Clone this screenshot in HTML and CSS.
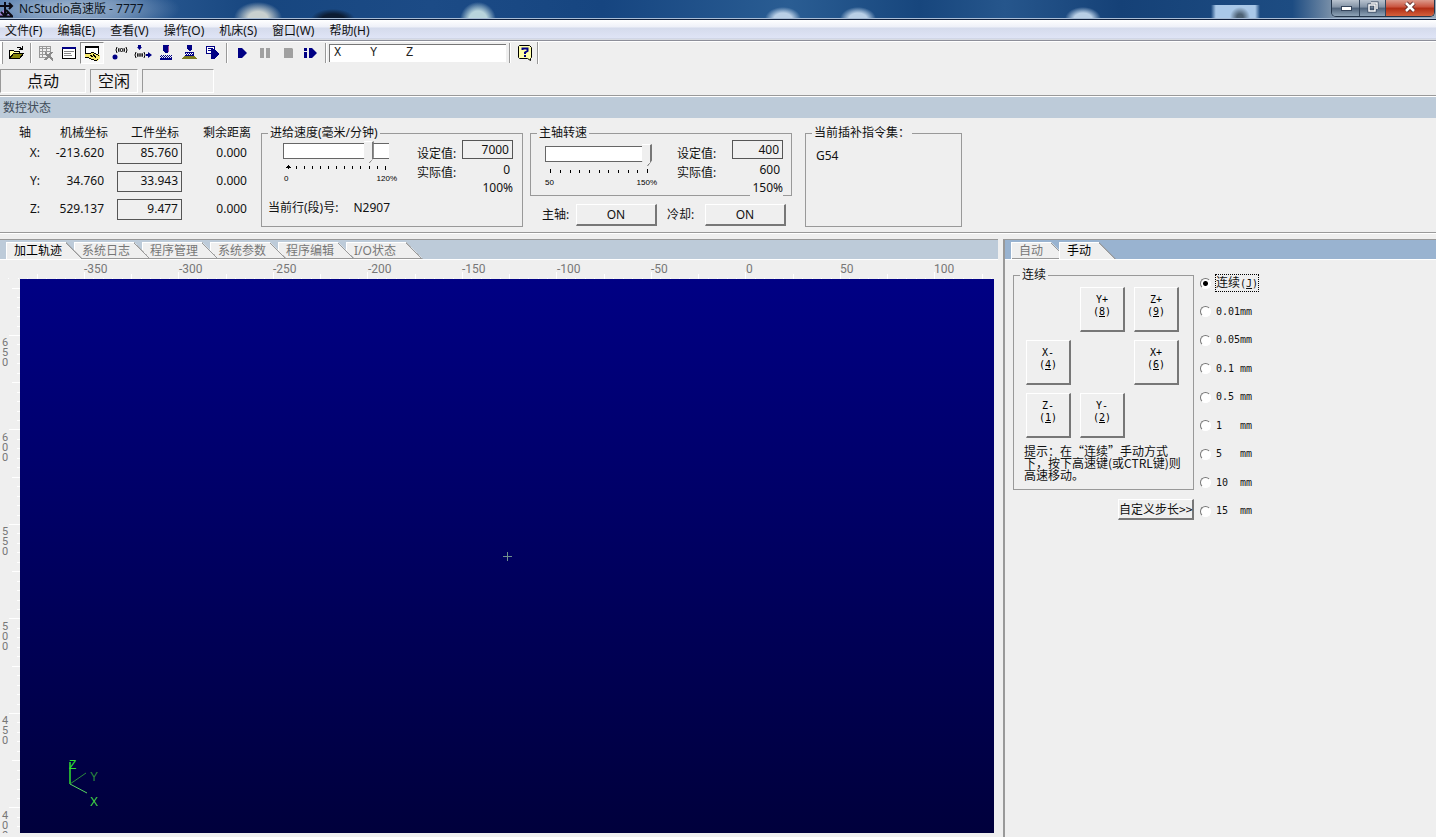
FILE: index.html
```html
<!DOCTYPE html>
<html lang="zh-CN">
<head>
<meta charset="utf-8">
<title>NcStudio高速版 - 7777</title>
<link rel="stylesheet" href="styles.css">
</head>
<body>
<div class="app">
  <header class="titlebar">
    <svg class="app-icon" width="14" height="16" viewBox="0 0 14 16">
      <path fill="#a583d6" d="M0 11l5-4v7H0zM8 9l5 5H8z"/>
      <path fill="none" stroke="#0b0b14" stroke-width="2" d="M0 4h11M9 1l3 3-3 3M5 0v12M1 10l4 4 3-4M6 8l6 6M0 14.500h13"/>
    </svg>
    <h1 class="title">NcStudio高速版 - 7777</h1>
    <div class="window-controls">
      <button class="win-btn" aria-label="最小化"><svg width="12" height="12" viewBox="0 0 12 12"><rect x="1.500" y="5.500" width="10" height="4" fill="#fff" stroke="#35455c"/></svg></button>
      <button class="win-btn" aria-label="还原"><svg width="12" height="12" viewBox="0 0 12 12"><path d="M4 2h6v6M2 4h6v6H2z" fill="none" stroke="#35455c" stroke-width="3"/><path d="M4 2h6v6M2 4h6v6H2z" fill="none" stroke="#fff" stroke-width="1.500"/></svg></button>
      <button class="win-btn win-close" aria-label="关闭"><svg width="14" height="12" viewBox="0 0 14 12"><path d="M3 2l8 8M11 2l-8 8" stroke="#5b2a2a" stroke-width="4.500"/><path d="M3 2l8 8M11 2l-8 8" stroke="#fff" stroke-width="2.500"/></svg></button>
    </div>
  </header>

  <nav class="menubar">
    <button>文件(F)</button><button>编辑(E)</button><button>查看(V)</button><button>操作(O)</button><button>机床(S)</button><button>窗口(W)</button><button>帮助(H)</button>
  </nav>

  <div class="toolbar">
    <span class="grip"></span>
    <button class="tool" aria-label="打开"><svg width="16" height="16" viewBox="0 0 16 16" shape-rendering="crispEdges"><path fill="#84840a" stroke="#000" d="M1.500 13.500v-8h4l1 1h5v2"/><path fill="#ffffa0" d="M2 6h3l1 1h5v2H5l-3 4z"/><path fill="#84840a" stroke="#000" d="M1.500 13.500l4-5h10l-4 5z"/><path fill="none" stroke="#000" d="M8.500 3.500l1-1h3l1 2M14.500 1v4M11 4.500h4"/></svg></button>
    <span class="sep"></span>
    <button class="tool" aria-label="卸载"><svg width="16" height="16" viewBox="0 0 16 16" shape-rendering="crispEdges"><path fill="none" stroke="#999" d="M1.500 1.500h11v11h-11zM1 3.500h11M1 6.500h11M1 9.500h11M4.500 2v11M8.500 2v7"/><path fill="none" stroke="#8a8a8a" stroke-width="2" d="M7 8l8 7M14 7l-7 8"/></svg></button>
    <button class="tool" aria-label="窗口"><svg width="16" height="16" viewBox="0 0 16 16" shape-rendering="crispEdges"><path fill="#fff" stroke="#000" d="M1.500 2.500h13v11h-13z"/><path fill="#000084" d="M1 2h14v2H1z"/><path stroke="#888" d="M3 6.500h10M3 8.500h7M3 10.500h8"/></svg></button>
    <button class="tool pressed" aria-label="手动"><svg width="16" height="16" viewBox="0 0 16 16" shape-rendering="crispEdges"><path fill="#fff" stroke="#000" d="M1.500 1.500h13v10h-13z"/><path fill="#000" d="M1 1h14v2H1z"/><path fill="#f5e76a" d="M1 8h5l3-1 4 2 3 1v4l-3 2-4-1-4-2H1z"/><path fill="none" stroke="#000" d="M1 8.500h4l4-1 4 2 2 1M1 12.500h3l4 2 4 1 2-1M6 10l3 2M9 9l3 4"/></svg></button>
    <span class="gap"></span>
    <button class="tool" aria-label="回原点"><svg width="16" height="16" viewBox="0 0 16 16"><circle cx="3" cy="12" r="2.500" fill="#000084"/><path fill="none" stroke="#000" d="M5 2q-2 3 0 6M7 3q-1 2 0 4M14 2q2 3 0 6M12 3q1 2 0 4"/><circle cx="9.500" cy="5" r="1.500" fill="none" stroke="#000"/></svg></button>
    <button class="tool" aria-label="回工件原点"><svg width="18" height="16" viewBox="0 0 18 16"><path fill="#000084" d="M4 0h3v2h1L5.500 5 3 2h1zM12 9h2V7l4 3-4 3v-2h-2z"/><path fill="none" stroke="#000" d="M2 7q-2 3 0 6M4 8q-1 2 0 4M10 7q2 3 0 6M8 8q1 2 0 4"/><circle cx="6" cy="10" r="1.200" fill="none" stroke="#000"/></svg></button>
    <button class="tool" aria-label="对刀"><svg width="16" height="16" viewBox="0 0 16 16" shape-rendering="crispEdges"><path fill="#000084" d="M5 0h6v6L9 8H8L5 6z"/><path fill="#a04aa0" d="M10 1h1v6h-1z"/><path fill="none" stroke="#000084" stroke-dasharray="1 1" d="M3 10.500h11M2 11.500h11M3 12.500h11"/><path fill="#000084" d="M2 13h12v2H2z"/></svg></button>
    <button class="tool" aria-label="浮动对刀"><svg width="16" height="16" viewBox="0 0 16 16" shape-rendering="crispEdges"><path fill="#000084" d="M6 0h5v4L9 6H8L6 4zM4 7h9v4H4z"/><path stroke="#fff" stroke-dasharray="1 1" d="M5 8.500h7M4 9.500h8"/><path fill="#7c7c20" d="M3 11h11l2 3H1z"/></svg></button>
    <button class="tool" aria-label="继续"><svg width="16" height="16" viewBox="0 0 16 16" shape-rendering="crispEdges"><path fill="#fff" stroke="#000084" d="M2.500 1.500h8v7h-8z"/><path stroke="#000084" d="M4 3.500h5M4 5.500h5"/><path fill="#000084" d="M7 4h3l5 5-5 5H7z"/></svg></button>
    <span class="sep"></span>
    <button class="tool" aria-label="开始"><svg width="16" height="16" viewBox="0 0 16 16"><path fill="#000084" d="M4 3h4l5 5-5 5H4z"/></svg></button>
    <button class="tool" aria-label="暂停"><svg width="16" height="16" viewBox="0 0 16 16"><path fill="#a0a0a0" d="M3 3h4v10H3zM9 3h4v10H9z"/></svg></button>
    <button class="tool" aria-label="停止"><svg width="16" height="16" viewBox="0 0 16 16"><path fill="#a0a0a0" d="M4 3h8l1 1v9H4z"/></svg></button>
    <button class="tool" aria-label="断点继续"><svg width="16" height="16" viewBox="0 0 16 16"><path fill="#000084" d="M1 3h3v3H1zM1 7h3v6H1zM6 3h3l5 5-5 5H6z"/></svg></button>
    <span class="sep"></span>
    <input class="mdi" aria-label="坐标指令" value="X    Y    Z">
    <span class="sep"></span>
    <button class="tool" aria-label="帮助"><svg width="16" height="18" viewBox="0 0 16 18"><path fill="#ffffa8" stroke="#000" d="M2.500 1.500h10l2 2v10l-1 1v2l-3-2h-8l-1-1v-11z"/><path fill="none" stroke="#000084" stroke-width="2" d="M5.500 6V4.500h5V7L8 8.500V10M8 11v2"/></svg></button>
    <span class="sep sep-end"></span>
  </div>

  <div class="statusbar">
    <output class="state state-mode">点动</output>
    <output class="state state-run">空闲</output>
    <output class="state state-extra"></output>
  </div>

  <section class="dock">
    <h2 class="dock-title">数控状态</h2>
    <div class="dock-body">
      <table class="coords">
        <thead><tr><th>轴</th><th>机械坐标</th><th>工件坐标</th><th>剩余距离</th></tr></thead>
        <tbody>
          <tr><td>X:</td><td>-213.620</td><td><button class="value-box">85.760</button></td><td>0.000</td></tr>
          <tr><td>Y:</td><td>34.760</td><td><button class="value-box">33.943</button></td><td>0.000</td></tr>
          <tr><td>Z:</td><td>529.137</td><td><button class="value-box">9.477</button></td><td>0.000</td></tr>
        </tbody>
      </table>

      <fieldset class="group feed">
        <legend>进给速度(毫米/分钟)</legend>
        <div class="rate">
          <div class="slider">
            <input type="range" min="0" max="120" value="100" aria-label="进给倍率">
            <svg class="ticks" width="107" height="6" viewBox="0 0 107 6" shape-rendering="crispEdges"><path fill="#000" d="M5 0h1v1h1v1h1v1H6v1H5V3H3V2h1V1h1z"/><path stroke="#000" d="M13.500 1v3M21.500 1v3M29.500 1v3M37.500 1v3M45.500 1v3M53.500 1v3M61.500 1v3M69.500 1v3M77.500 1v3M86.500 1v3M94.500 1v3M102.500 1v4"/></svg>
            <div class="scale"><span>0</span><span>120%</span></div>
          </div>
          <div class="readings">
            <label for="feed-set">设定值:</label><input id="feed-set" class="value-box" value="7000">
            <span>实际值:</span><output>0</output>
            <output class="percent">100%</output>
          </div>
        </div>
        <p class="line-no"><span>当前行(段)号:</span><output>N2907</output></p>
      </fieldset>

      <div class="spindle-column">
        <fieldset class="group spindle">
          <legend>主轴转速</legend>
          <div class="rate">
            <div class="slider">
              <input type="range" min="50" max="150" value="150" aria-label="主轴倍率">
              <svg class="ticks" width="107" height="6" viewBox="0 0 107 6" shape-rendering="crispEdges"><path stroke="#000" d="M5.500 0v4M15.500 1v3M25.500 1v3M34.500 1v3M44.500 1v3M54.500 1v3M63.500 1v3M73.500 1v3M83.500 1v3M92.500 1v3M102.500 0v4"/></svg>
              <div class="scale"><span>50</span><span>150%</span></div>
            </div>
            <div class="readings">
              <label for="spindle-set">设定值:</label><input id="spindle-set" class="value-box" value="400">
              <span>实际值:</span><output>600</output>
              <output class="percent">150%</output>
            </div>
          </div>
        </fieldset>
        <div class="switches">
          <label for="spindle-on">主轴:</label><button id="spindle-on" class="raised">ON</button>
          <label for="coolant-on">冷却:</label><button id="coolant-on" class="raised">ON</button>
        </div>
      </div>

      <fieldset class="group modal">
        <legend>当前插补指令集：</legend>
        <output>G54</output>
      </fieldset>
    </div>
  </section>

  <main class="workspace">
    <section class="trace">
      <div class="tabs" role="tablist">
        <button class="tab active" role="tab" aria-selected="true">加工轨迹</button>
        <button class="tab" role="tab">系统日志</button>
        <button class="tab" role="tab">程序管理</button>
        <button class="tab" role="tab">系统参数</button>
        <button class="tab" role="tab">程序编辑</button>
        <button class="tab" role="tab">I/O状态</button>
      </div>
      <svg class="ruler-x" shape-rendering="crispEdges">
        <defs><pattern id="tx" x="84" width="189" height="20" patternUnits="userSpaceOnUse"><path stroke="#fff" d="M.5 12v8M47.500 14v6M94.500 12v8M142.500 14v6M9.500 18v2M19.500 18v2M28.500 18v2M38.500 18v2M57.500 18v2M66.500 18v2M76.500 18v2M85.500 18v2M104.500 18v2M113.500 18v2M123.500 18v2M132.500 18v2M151.500 18v2M161.500 18v2M170.500 18v2M180.500 18v2"/></pattern></defs>
        <rect width="100%" height="20" fill="url(#tx)"/>
        <text x="84" y="13">-350</text><text x="179" y="13">-300</text><text x="273" y="13">-250</text><text x="368" y="13">-200</text><text x="462" y="13">-150</text><text x="557" y="13">-100</text><text x="651" y="13">-50</text><text x="746" y="13">0</text><text x="840" y="13">50</text><text x="934" y="13">100</text>
      </svg>
      <div class="plot">
        <svg class="ruler-y" shape-rendering="crispEdges">
          <defs><pattern id="ty" y="56" width="20" height="189" patternUnits="userSpaceOnUse"><path stroke="#fff" d="M9 .5h11M12 47.500h8M9 94.500h11M12 142.500h8M17 9.500h3M17 19.500h3M17 28.500h3M17 38.500h3M17 57.500h3M17 66.500h3M17 76.500h3M17 85.500h3M17 104.500h3M17 113.500h3M17 123.500h3M17 132.500h3M17 151.500h3M17 161.500h3M17 170.500h3M17 180.500h3"/></pattern></defs>
          <rect width="20" height="100%" fill="url(#ty)"/>
          <text><tspan x="2" y="67">6</tspan><tspan x="2" y="77">5</tspan><tspan x="2" y="87">0</tspan></text>
          <text><tspan x="2" y="162">6</tspan><tspan x="2" y="172">0</tspan><tspan x="2" y="182">0</tspan></text>
          <text><tspan x="2" y="256">5</tspan><tspan x="2" y="266">5</tspan><tspan x="2" y="276">0</tspan></text>
          <text><tspan x="2" y="351">5</tspan><tspan x="2" y="361">0</tspan><tspan x="2" y="371">0</tspan></text>
          <text><tspan x="2" y="445">4</tspan><tspan x="2" y="455">5</tspan><tspan x="2" y="465">0</tspan></text>
          <text><tspan x="2" y="540">4</tspan><tspan x="2" y="550">0</tspan><tspan x="2" y="560">0</tspan></text>
        </svg>
        <div class="canvas">
          <svg class="cursor" width="9" height="9" viewBox="0 0 9 9" shape-rendering="crispEdges"><path stroke="#6f8f8c" d="M0 4.500h9M4.500 0v9"/></svg>
          <svg class="axes" width="36" height="56" viewBox="0 0 36 56"><path stroke="#2fe02f" stroke-width="1.500" d="M5 10v22"/><path stroke="#2b8a3c" d="M5 32l16-11"/><path stroke="#58d860" d="M5 32l17 9"/><text x="4" y="17" fill="#2fe02f">Z</text><text x="25" y="29" fill="#2b8a3c">Y</text><text x="25" y="54" fill="#45d845">X</text></svg>
        </div>
      </div>
    </section>

    <aside class="manual">
      <div class="tabs" role="tablist">
        <button class="tab" role="tab">自动</button>
        <button class="tab active" role="tab" aria-selected="true">手动</button>
      </div>
      <div class="manual-body">
        <div class="jog-column">
          <fieldset class="group jog">
            <legend>连续</legend>
            <div class="pad">
              <span></span>
              <button class="raised key">Y+<br>(<u>8</u>)</button>
              <button class="raised key">Z+<br>(<u>9</u>)</button>
              <button class="raised key">X-<br>(<u>4</u>)</button>
              <span></span>
              <button class="raised key">X+<br>(<u>6</u>)</button>
              <button class="raised key">Z-<br>(<u>1</u>)</button>
              <button class="raised key">Y-<br>(<u>2</u>)</button>
            </div>
            <p class="hint">提示：在“连续”手动方式<br>下，按下高速键(或CTRL键)则<br>高速移动。</p>
          </fieldset>
          <button class="raised custom">自定义步长&gt;&gt;</button>
        </div>
        <div class="steps">
          <label><input type="radio" name="step" checked><span class="focused">连续<span class="hotkey">(<u>J</u>)</span></span></label>
          <label><input type="radio" name="step"><span>0.01mm</span></label>
          <label><input type="radio" name="step"><span>0.05mm</span></label>
          <label><input type="radio" name="step"><span>0.1 mm</span></label>
          <label><input type="radio" name="step"><span>0.5 mm</span></label>
          <label><input type="radio" name="step"><span>1   mm</span></label>
          <label><input type="radio" name="step"><span>5   mm</span></label>
          <label><input type="radio" name="step"><span>10  mm</span></label>
          <label><input type="radio" name="step"><span>15  mm</span></label>
        </div>
      </div>
    </aside>
  </main>
</div>
</body>
</html>
```
FILE: styles.css
```css
* { box-sizing: border-box; }
html, body { height: 100%; margin: 0; }
body {
  background: #efefef;
  color: #111;
  font: 12px/14px "Noto Sans", "Noto Sans CJK SC", sans-serif;
  overflow: hidden;
}
button, input { font: inherit; color: inherit; margin: 0; padding: 0; border: 0; border-radius: 0; background: none; }
h1, h2, p { margin: 0; font-size: 12px; font-weight: 400; }
svg { display: block; flex: none; }
.app { display: flex; flex-direction: column; height: 100%; }

/* Title bar */
.titlebar {
  display: flex;
  align-items: flex-start;
  height: 20px;
  flex: none;
  border-bottom: 1px solid #10203c;
  box-shadow: inset 0 -1px #a9bdd6;
  background:
    radial-gradient(ellipse 110px 26px at 70px 9px, #a6b9d0, #8ba5c5c0 50%, transparent),
    radial-gradient(ellipse 24px 16px at 258px 18px, #c9d0cf 40%, transparent),
    radial-gradient(ellipse 22px 10px at 333px 19px, #0c1c33 50%, transparent),
    radial-gradient(ellipse 18px 18px at 478px 20px, #b8d4dc 50%, transparent),
    radial-gradient(ellipse 18px 12px at 783px 19px, #b9cfe6 50%, transparent),
    radial-gradient(ellipse 18px 12px at 858px 19px, #b9cfe6 50%, transparent),
    radial-gradient(ellipse 18px 12px at 1083px 19px, #b9cfe6 50%, transparent),
    radial-gradient(ellipse 10px 10px at 1240px 17px, #4d6275 30%, transparent),
    linear-gradient(90deg, transparent, #a9c8e8 10%, #a9c8e8 90%, transparent) 1211px 5px / 49px 14px no-repeat,
    linear-gradient(90deg, #3d6da5, #17467f 18%, #1c4b86 30%, #164580 42%, #2a5d93 55%, #17467d 64%, #26568c 70%, #154177 78%, #1d4c82 90%, #8296ac 93%, #9aa9b8);
}
.app-icon { margin-top: 2px; }
.title { padding: 1px 0 0 5px; line-height: 16px; color: #0c1522; }
.window-controls { display: flex; margin: 0 1px 0 auto; border: 1px solid #24364c; border-top: 0; border-radius: 0 0 5px 5px; overflow: hidden; }
.win-btn { display: grid; place-items: center; width: 28px; height: 16px; padding-bottom: 3px; border-right: 1px solid #33455c; background: linear-gradient(#b9c3cf, #8292a5 45%, #4e627a 50%, #8fa4b8); }
.win-btn + .win-btn { width: 26px; }
.win-btn.win-close { width: 48px; border: 0; background: linear-gradient(#dc9a8c, #c8513c 45%, #b02c14 50%, #d4603c); }

/* Menu */
.menubar { display: flex; gap: 15px; height: 21px; flex: none; padding-left: 5px; border-bottom: 1px solid #8d8f9a; background: linear-gradient(#fff, #eef0f8 35%, #d5dbec 40%, #dfe4f6 90%, #c4cad8 95%, #eee); }
.menubar button { line-height: 19px; }

/* Toolbar */
.toolbar { display: flex; align-items: center; height: 27px; flex: none; padding-bottom: 4px; border-top: 1px solid #fff; }
.grip { width: 3px; height: 22px; margin-right: 1px; border-right: 1px solid #999; background: #fff; }
.tool { display: grid; place-items: center; width: 23px; height: 22px; flex: none; }
.tool.pressed { width: 24px; border: 1px solid #888; border-right-color: #fff; border-bottom-color: #fff; background: #f8f8f8; }
.sep { width: 2px; height: 20px; margin: 0 2px 0 3px; border-left: 1px solid #999; border-right: 1px solid #fff; flex: none; }
.gap { width: 4px; }
.sep-end { height: 22px; margin-left: 1px; }
.mdi { width: 177px; height: 18px; padding: 0 4px 2px; border-left: 1px solid #777; border-top: 1px solid #777; background: #fff; font: 12px/14px "Liberation Mono", monospace; color: #222; }

/* Machine state */
.statusbar { display: flex; gap: 4px; height: 28px; flex: none; padding-top: 1px; border-bottom: 1px solid #999; }
.state { height: 24px; border: 1px solid #fff; border-top-color: #999; border-left-color: #999; text-align: center; font-size: 16px; line-height: 23px; }
.state-mode { width: 86px; }
.state-run { width: 48px; }
.state-extra { width: 72px; }

/* Status dock */
.dock { flex: none; border-top: 1px solid #fff; border-bottom: 1px solid #999; }
.dock-title { height: 21px; padding-left: 3px; line-height: 21px; color: #3f4c59; background: #bdcbd9; }
.dock-body { display: flex; height: 114px; align-items: flex-start; }
.coords { width: 251px; margin: 7px 10px 0 0; border-collapse: collapse; table-layout: fixed; flex: none; }
.coords th { padding: 2px 0 0; width: 68px; height: 14px; line-height: 12px; font-weight: 400; text-align: right; white-space: nowrap; }
.coords th:first-child { width: 40px; padding-right: 9px; }
.coords th:nth-child(3) { width: 74px; padding-right: 3px; }
.coords th:nth-child(4) { width: 69px; }
.coords td { height: 28px; padding: 0 4px 0 0; text-align: right; }
.coords td:first-child { padding-right: 0; }
.coords td:nth-child(3) { padding: 0; }
.value-box { border: 1px solid #555; text-align: right; padding-right: 3px; }
.coords .value-box { width: 65px; height: 21px; }

.group { min-width: 0; margin: 0; padding: 0; border: 1px solid #999; }
.group legend { margin-left: 6px; padding: 0 2px; height: 14px; line-height: 14px; }
.dock-body .group { margin-top: 8px; height: 101px; flex: none; }
.dock-body .feed { width: 262px; }
.dock-body .spindle { height: 70px; }
.dock-body .modal { width: 157px; }
.modal output { display: block; padding: 9px 10px; }
.spindle-column { width: 262px; margin: 0 13px 0 7px; flex: none; }
.rate { display: flex; justify-content: space-between; height: 56px; }
.slider { padding-left: 21px; }
.feed .slider { width: 139px; }
.spindle .slider { width: 130px; padding: 3px 0 0 14px; }
.slider input { display: block; appearance: none; width: 107px; height: 24px; background: linear-gradient(#fff, #fff) 1px 4px / 105px 14px no-repeat, linear-gradient(#666, #666) 0 3px / 106px 16px no-repeat; }
.slider input::-webkit-slider-thumb { appearance: none; width: 10px; height: 22px; background: linear-gradient(135deg, #efefef 88%, #777 89%); border-right: 2px solid #777; border-top: 1px solid #fff; clip-path: polygon(0 0, 100% 0, 100% 75%, 60% 100%, 0 80%); }
.ticks { margin-top: 1px; }
.spindle .ticks { margin-top: 2px; }
.scale { display: flex; justify-content: space-between; width: 114px; padding-left: 1px; font: 8px/16px "Liberation Sans", sans-serif; color: #000; }
.spindle .scale { padding-left: 0; width: 112px; }
.readings { display: grid; grid-template-columns: 1fr 51px; grid-template-rows: 21px 18px 15px; column-gap: 4px; width: 96px; margin-right: 9px; white-space: nowrap; }
.spindle .readings { width: 106px; margin-right: 8px; }
.readings label { padding-top: 7px; }
.readings span { padding-top: 5px; }
.readings output { text-align: right; padding: 2px 3px 0 0; }
.readings .value-box { width: 51px; height: 19px; }
.readings .percent { grid-column: 2; justify-self: end; padding: 2px 0 0 2px; height: 17px; background: #efefef; }
.line-no { display: flex; gap: 15px; padding: 5px 0 0 6px; }
.switches { display: flex; align-items: center; height: 22px; margin-top: 8px; padding-left: 12px; }
.switches label { width: 34px; }
.switches .raised { width: 81px; height: 22px; }
.switches .raised + label { width: 38px; margin-left: 10px; }
.raised { border: 1px solid #fff; border-right: 2px solid #777; border-bottom: 2px solid #777; background: #efefef; }

/* Workspace */
.workspace { display: flex; flex: 1; min-height: 0; padding-top: 5px; border-top: 1px solid #fff; }
.trace { display: flex; flex-direction: column; flex: 1; min-width: 0; border-top: 1px solid #999; padding-bottom: 4px; }
.tabs { display: flex; align-items: flex-end; height: 20px; flex: none; padding-left: 6px; background: #bdcbd9; border-bottom: 1px solid #fff; isolation: isolate; }
.tab { position: relative; height: 17px; width: 60px; margin-right: 8px; padding-left: 7px; text-align: left; white-space: nowrap; line-height: 16px; color: #777; background: #efefef; border: 0 solid #fff; border-top-width: 1px; border-left-width: 1px; box-shadow: inset 0 -1px #999; }
.tab::after {
  content: "";
  position: absolute;
  z-index: 1;
  top: -1px;
  left: 100%;
  width: 17px;
  height: 17px;
  background: linear-gradient(to top right, transparent calc(50% - 1px), #999 calc(50% - 1px), #999 50%, transparent 50%), linear-gradient(#efefef 16px, #999 16px);
  clip-path: polygon(0 0, 100% 100%, 0 100%);
}
.tab.active { color: #000; box-shadow: none; z-index: 2; }
.tab.active::after { background: linear-gradient(to top right, #efefef calc(50% - 1px), #999 calc(50% - 1px)); }
.ruler-x { width: 100%; height: 19px; }
.ruler-x text { font: 12px "Roboto", sans-serif; fill: #777; }
.ruler-y text { font: 11px "Roboto", sans-serif; fill: #777; }
.plot { display: flex; flex: 1; min-height: 0; }
.ruler-y { width: 20px; height: 100%; }
.canvas { position: relative; flex: 1; margin-right: 4px; background: linear-gradient(#000084, #00003c); }
.cursor { position: absolute; left: 50%; top: 50%; transform: translate(-4px, -4px); }
.axes { position: absolute; left: 45px; bottom: 25px; }
.axes text { font: 12px "Liberation Sans", sans-serif; }

/* Manual panel */
.manual { width: 433px; flex: none; margin-left: 5px; border-left: 2px solid #999; border-top: 1px solid #999; }
.manual .tabs { background: #99b3d0; }
.manual .tab { width: 40px; }
.manual-body { display: flex; gap: 6px; padding: 8px 8px; align-items: stretch; }
.jog-column { display: flex; flex-direction: column; align-items: flex-end; width: 181px; }
.jog { width: 181px; height: 222px; }
.pad { display: grid; grid-template-columns: repeat(3, 45px); grid-auto-rows: 45px; gap: 8px 9px; padding: 5px 12px 0; }
.key { padding-bottom: 6px; font: 10px/12px "DejaVu Sans Mono", monospace; color: #000; }
.hint { padding: 7px 0 0 10px; font: 12px/12px "Noto Sans CJK SC", sans-serif; white-space: nowrap; }
.custom { width: 76px; height: 21px; margin-top: 9px; font-family: "Noto Sans CJK SC", sans-serif; line-height: 16px; white-space: nowrap; }
.steps { display: flex; flex-direction: column; justify-content: space-between; padding-top: 6px; }
.steps label { display: flex; align-items: center; gap: 5px; height: 18px; font: 10px/14px "DejaVu Sans Mono", monospace; white-space: pre; }
.steps input { appearance: none; width: 11px; height: 11px; border: 1px solid #fff; border-top-color: #777; border-left-color: #777; border-radius: 50%; background: #fff; }
.steps input:checked { background: radial-gradient(circle, #000 2px, #fff 3px); }
.focused { outline: 1px dotted #000; font: 12px/14px "Noto Sans CJK SC", sans-serif; }
.hotkey { font: 10px/14px "DejaVu Sans Mono", monospace; }
```
